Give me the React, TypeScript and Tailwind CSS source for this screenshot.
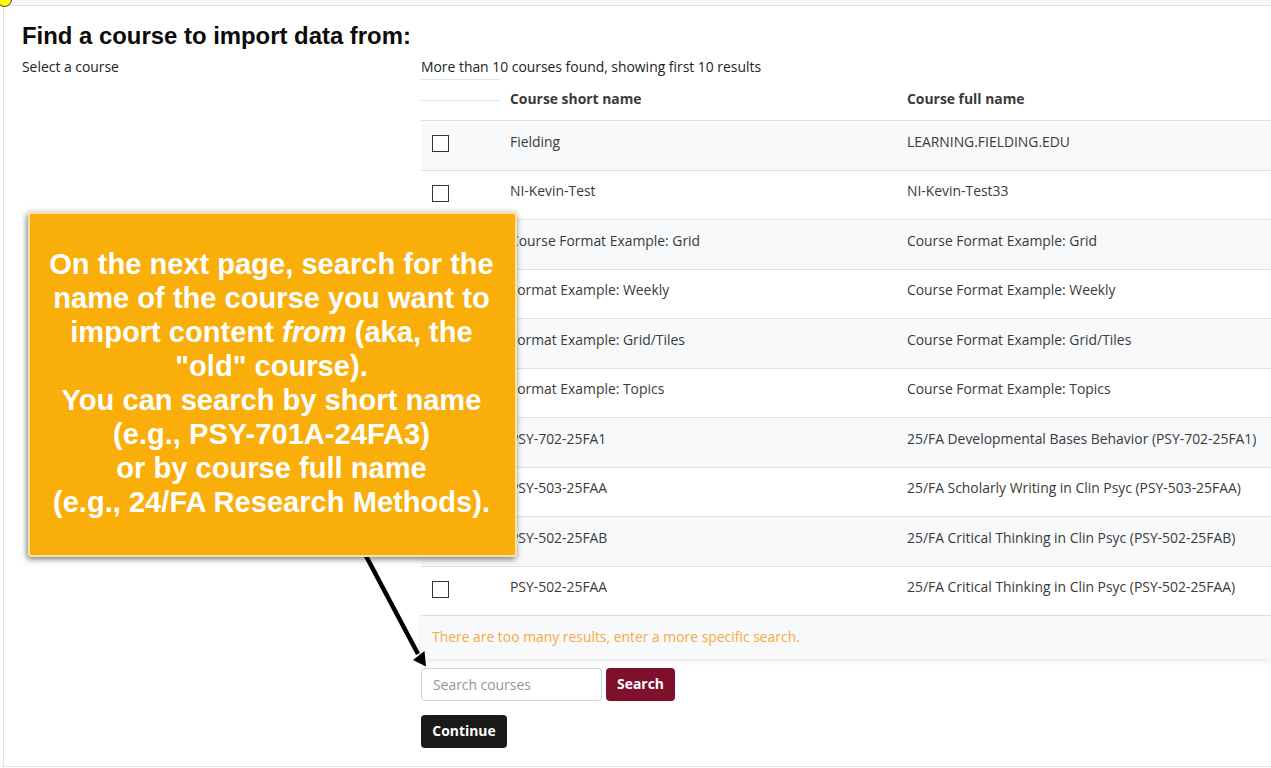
const courses = [
  { short: "Fielding", full: "LEARNING.FIELDING.EDU" },
  { short: "NI-Kevin-Test", full: "NI-Kevin-Test33" },
  { short: "Course Format Example: Grid", full: "Course Format Example: Grid" },
  { short: "Format Example: Weekly", full: "Course Format Example: Weekly" },
  { short: "Format Example: Grid/Tiles", full: "Course Format Example: Grid/Tiles" },
  { short: "Format Example: Topics", full: "Course Format Example: Topics" },
  { short: "PSY-702-25FA1", full: "25/FA Developmental Bases Behavior (PSY-702-25FA1)" },
  { short: "PSY-503-25FAA", full: "25/FA Scholarly Writing in Clin Psyc (PSY-503-25FAA)" },
  { short: "PSY-502-25FAB", full: "25/FA Critical Thinking in Clin Psyc (PSY-502-25FAB)" },
  { short: "PSY-502-25FAA", full: "25/FA Critical Thinking in Clin Psyc (PSY-502-25FAA)" },
];

function CourseRow({ short, full, odd }: { short: string; full: string; odd: boolean }) {
  return (
    <div className={`flex h-[49.5px] border-b border-[#dee2e6] ${odd ? "bg-[#f8f9fa]" : "bg-white"}`}>
      <div className="flex w-[79px] shrink-0 items-center pb-[4px] pl-[11px]">
        <span className="block h-[17px] w-[17px] border border-[#333] bg-white" />
      </div>
      <div className="w-[407px] shrink-0 pl-[10px] pt-[10.6px]">{short}</div>
      <div className="flex-1 whitespace-nowrap pt-[10.6px]">{full}</div>
    </div>
  );
}

function Callout() {
  return (
    <div className="absolute left-[28px] top-[212px] z-20 flex h-[345px] w-[489px] items-center justify-center rounded-[3px] border-2 border-[#fbe3a8] bg-[#f9ae09] pb-[4px] pr-[2px] text-center font-['Liberation_Sans',sans-serif] text-[29.1px] font-bold leading-[34px] text-white shadow-[-1px_2px_6px_rgba(0,0,0,0.55)]">
      <p>
        On the next page, search for the
        <br />
        name of the course you want to
        <br />
        import content <em>from</em> (aka, the
        <br />
        "old" course).
        <br />
        You can search by short name
        <br />
        (e.g., PSY-701A-24FA3)
        <br />
        or by course full name
        <br />
        (e.g., 24/FA Research Methods).
      </p>
    </div>
  );
}

function Arrow() {
  return (
    <svg className="absolute left-[355px] top-[550px] z-10" width="80" height="125" viewBox="0 0 80 125">
      <line x1="11" y1="6" x2="63" y2="104" stroke="#000" strokeWidth="4.5" />
      <polygon points="71,116.5 58,110 69.5,101" fill="#000" />
    </svg>
  );
}

export default function App() {
  return (
    <div className="relative h-[768px] w-full overflow-hidden bg-white font-['Open_Sans',sans-serif] text-[13.9px] text-[#3a3a3a]">
      <div className="h-[5px] bg-[#f8f9fa]" />
      <div className="absolute -left-[3px] -top-[8px] h-[15px] w-[15px] rounded-full border border-[#333] bg-[#ffff00]" />
      <div className="ml-[3px] h-[762px] border-b border-l border-t border-[#dee2e6] pl-[18px] pt-[15px]">
        <h2 className="font-['Liberation_Sans',sans-serif] text-[23.9px] font-bold leading-[30px] text-[#0b0b0b]">
          Find a course to import data from:
        </h2>
        <div className="mt-[6px] flex">
          <div className="w-[399px] shrink-0 text-[#222]">Select a course</div>
          <div className="min-w-0 flex-1">
            <div className="text-[#222]">More than 10 courses found, showing first 10 results</div>
            <div className="mt-[1px] flex h-[42.4px] border-b border-[#dee2e6]">
              <div className="h-[22px] w-[79px] shrink-0 border-b border-t border-[#dee2e6]" />
              <div className="w-[407px] shrink-0 pl-[10px] pt-[10px] font-bold">Course short name</div>
              <div className="flex-1 pt-[10px] font-bold">Course full name</div>
            </div>
            {courses.map((c, i) => (
              <CourseRow key={c.short} short={c.short} full={c.full} odd={i % 2 === 0} />
            ))}
            <div className="h-[43px] bg-[#f8f9fa] pl-[11px] pt-[11px] text-[#f7a83e] shadow-[0_2px_6px_rgba(0,0,0,0.1)]">
              There are too many results, enter a more specific search.
            </div>
            <div className="mt-[9px] flex gap-[4px]">
              <input
                className="h-[33px] w-[181px] rounded-[4px] border border-[#ced4da] bg-white px-[11px] text-[13.9px] outline-none placeholder:text-[#8f959e]"
                placeholder="Search courses"
              />
              <button className="h-[33px] w-[69px] rounded-[4px] bg-[#7f0f2a] text-[13.9px] font-bold text-white">
                Search
              </button>
            </div>
            <button className="mt-[14px] block h-[33px] w-[86px] rounded-[4px] bg-[#1a1a1a] text-[13.9px] font-bold text-white">
              Continue
            </button>
          </div>
        </div>
      </div>
      <Arrow />
      <Callout />
    </div>
  );
}
